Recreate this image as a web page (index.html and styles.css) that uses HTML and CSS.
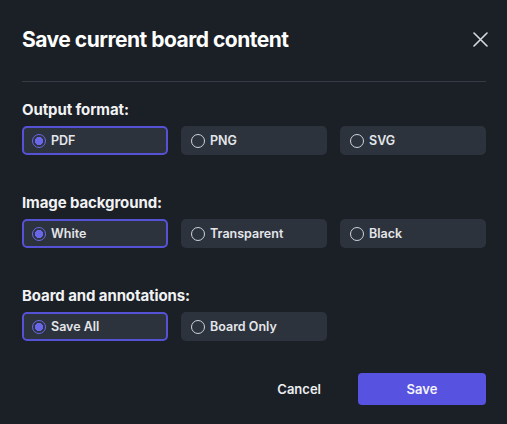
FILE: index.html
```html
<!DOCTYPE html>
<html lang="en">
<head>
<meta charset="utf-8">
<title>Save current board content</title>
<link rel="stylesheet" href="styles.css">
</head>
<body>
<div class="dialog">
  <header class="header">
    <h1 class="title">Save current board content</h1>
    <button class="close" aria-label="Close">
      <svg width="15" height="15" viewBox="0 0 15 15"><path d="M1 1L14 14M14 1L1 14" stroke="#d7dbe0" stroke-width="1.6" stroke-linecap="round"/></svg>
    </button>
  </header>
  <div class="divider"></div>

  <section class="group">
    <div class="label">Output format:</div>
    <div class="options">
      <div class="opt selected"><span class="radio"></span>PDF</div>
      <div class="opt"><span class="radio"></span>PNG</div>
      <div class="opt"><span class="radio"></span>SVG</div>
    </div>
  </section>

  <section class="group">
    <div class="label">Image background:</div>
    <div class="options">
      <div class="opt selected"><span class="radio"></span>White</div>
      <div class="opt"><span class="radio"></span>Transparent</div>
      <div class="opt"><span class="radio"></span>Black</div>
    </div>
  </section>

  <section class="group">
    <div class="label">Board and annotations:</div>
    <div class="options">
      <div class="opt selected"><span class="radio"></span>Save All</div>
      <div class="opt"><span class="radio"></span>Board Only</div>
    </div>
  </section>

  <footer class="footer">
    <button class="btn-cancel">Cancel</button>
    <button class="btn-save">Save</button>
  </footer>
</div>
</body>
</html>
```
FILE: styles.css
```css
html, body {
  margin: 0;
  padding: 0;
  background: #1b1f26;
  width: 507px;
  height: 424px;
  overflow: hidden;
}
body {
  font-family: Inter, "Noto Sans", "Liberation Sans", sans-serif;
  color: #e8eaee;
}
.dialog {
  padding: 0 21px 0 22px;
}
.header {
  display: flex;
  align-items: center;
  justify-content: space-between;
  height: 40px;
  padding-top: 19px;
}
.title {
  margin: 0;
  font-size: 21px;
  font-weight: 700;
  letter-spacing: -0.5px;
  color: #ffffff;
}
.close {
  background: none;
  border: 0;
  padding: 0;
  margin-right: -2px;
  width: 15px;
  height: 15px;
  display: flex;
}
.divider {
  height: 1px;
  background: #353b45;
  margin-top: 22px;
}
.group {
  margin-top: 19px;
}
.group + .group {
  margin-top: 39px;
}
.label {
  font-size: 15px;
  font-weight: 700;
  letter-spacing: -0.1px;
  color: #f1f2f4;
  line-height: 18px;
}
.options {
  display: grid;
  grid-template-columns: repeat(3, 1fr);
  column-gap: 13px;
  margin-top: 7px;
}
.opt {
  height: 29px;
  box-sizing: border-box;
  border-radius: 5px;
  background: #2d333d;
  border: 2px solid transparent;
  display: flex;
  align-items: center;
  padding-left: 8px;
  font-size: 12.5px;
  font-weight: 600;
  color: #e4e6ea;
}
.opt.selected {
  border-color: #5652d6;
}
.radio {
  width: 14px;
  height: 14px;
  box-sizing: border-box;
  border-radius: 50%;
  border: 1.7px solid #cfd3d9;
  margin-right: 5px;
  flex: none;
}
.opt.selected .radio {
  border-color: #6a67ea;
  background: radial-gradient(circle, #6a67ea 0 3.8px, transparent 4.4px);
}
.footer {
  display: flex;
  justify-content: flex-end;
  align-items: center;
  margin-top: 32px;
}
.btn-cancel {
  background: none;
  border: 0;
  font-family: inherit;
  font-size: 13px;
  font-weight: 600;
  color: #eceef1;
  padding: 0;
  margin-right: 37px;
}
.btn-save {
  width: 128px;
  height: 32px;
  border: 0;
  border-radius: 4px;
  background: #5752e0;
  color: #f4f4fb;
  font-family: inherit;
  font-size: 13px;
  font-weight: 600;
}
```
